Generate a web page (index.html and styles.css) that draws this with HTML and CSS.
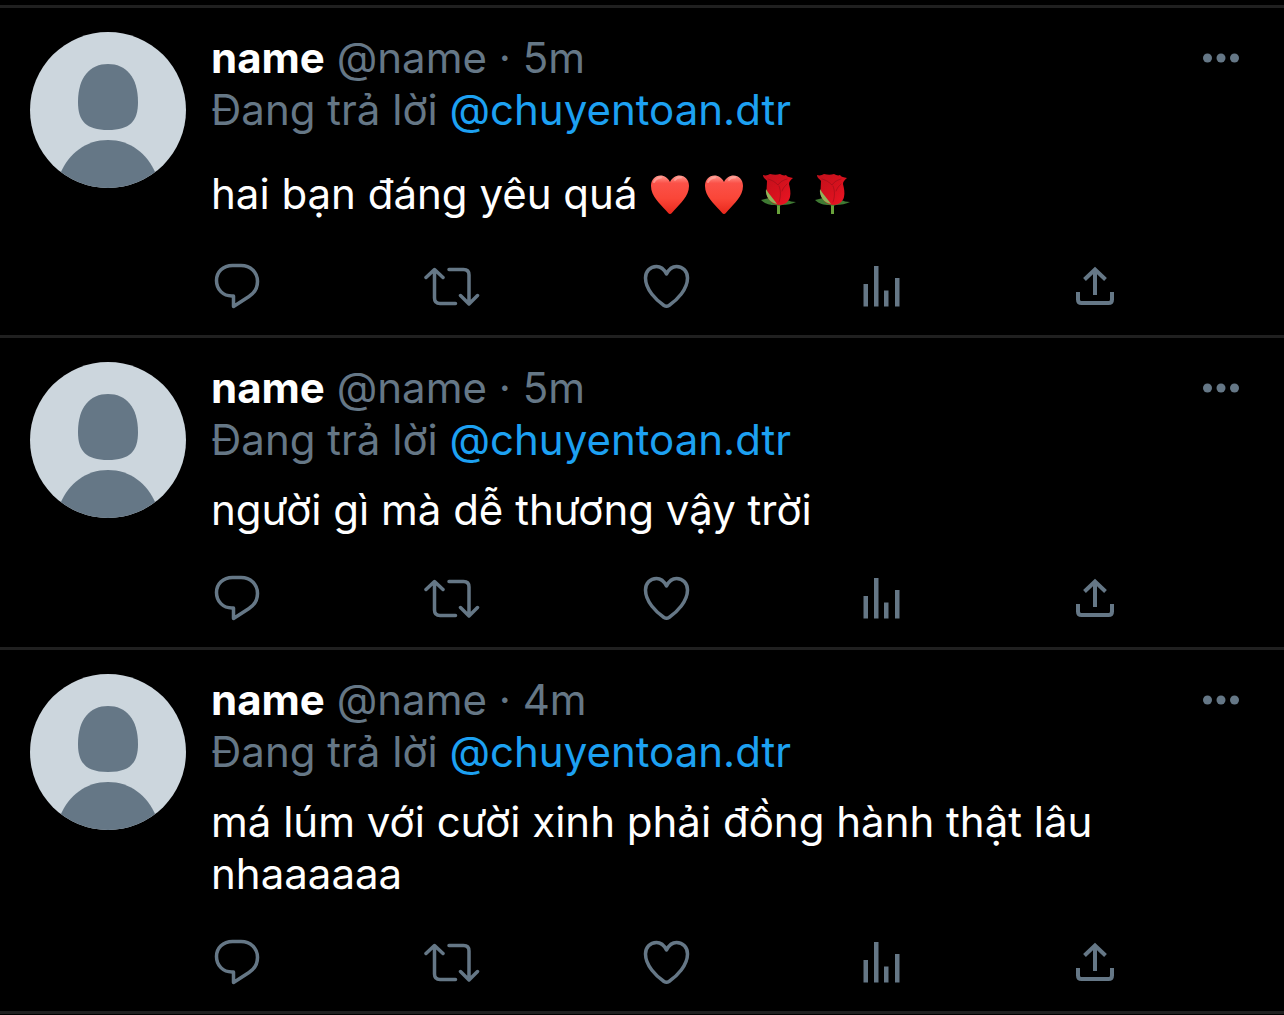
FILE: index.html
```
<!DOCTYPE html>
<html lang="vi">

<head>
    <meta charset="UTF-8">
    <meta name="viewport" content="width=device-width, initial-scale=1.0">
    <title>Tweets</title>
    <link rel="stylesheet" href="styles.css">
</head>

<body>
    <svg class="sprite" aria-hidden="true">
        <defs>
            <linearGradient id="heart-fill" x1="0" y1="0" x2="0" y2="1">
                <stop offset="0" stop-color="#ff9a90" />
                <stop offset="0.2" stop-color="#fb5148" />
                <stop offset="0.6" stop-color="#fa4638" />
                <stop offset="1" stop-color="#e8281c" />
            </linearGradient>
            <linearGradient id="rose-fill" x1="0" y1="0" x2="1" y2="1">
                <stop offset="0" stop-color="#c2101c" />
                <stop offset="0.5" stop-color="#d5111d" />
                <stop offset="1" stop-color="#ee1525" />
            </linearGradient>
        </defs>
        <symbol id="avatar" viewBox="0 0 156 156">
            <path d="M78 32c18 0 30 13 30 38 0 19-8 28-30 28s-30-9-30-28c0-25 12-38 30-38z" />
            <path d="M30 142C39 121 56 108 78 108s39 13 48 34v14H30z" />
        </symbol>
        <symbol id="more" viewBox="0 0 36 10">
            <circle cx="4.5" cy="5" r="4.5" />
            <circle cx="18" cy="5" r="4.5" />
            <circle cx="31.5" cy="5" r="4.5" />
        </symbol>
        <symbol id="reply" viewBox="0 0 52 52">
            <path d="M22.5 36v10.5L38 36.5C43.5 33 46.5 28 46.5 21.5 46.5 12 39.5 5.5 30 5.5h-8.5C12 5.5 5.5 12 5.5 20.5 5.5 29.5 12 36 21 36z" fill="none" stroke="currentColor" stroke-width="3.5" stroke-linejoin="round" />
        </symbol>
        <symbol id="retweet" viewBox="-2 0 56 52">
            <path d="M0 17.5l8.5-8 8.5 8M8.5 10v28q0 5.5 5.5 5.5H29.5M23 9.5H37.5q5.5 0 5.5 5.5v28M34.5 35.5l8.5 8.5 8.5-8.5" fill="none" stroke="currentColor" stroke-width="3.5" stroke-linecap="round" stroke-linejoin="round" />
        </symbol>
        <symbol id="like" viewBox="0 0 52 52">
            <path d="M26.5 14C24 9 20.5 6.5 16.5 6.5 10 6.5 5.5 11.5 5.5 18c0 11.5 10.5 22 18.5 27.5q2.5 1.5 5 0C37 40 47.5 29.5 47.5 18 47.5 11.5 43 6.5 36.5 6.5 32.5 6.5 29 9 26.5 14z" fill="none" stroke="currentColor" stroke-width="3.5" stroke-linejoin="round" />
        </symbol>
        <symbol id="stats" viewBox="0 0 52 52">
            <path d="M8.5 24H13v22.5H8.5zM19 6h4.5v40.5H19zM29 30.5h4.5v16H29zM40 18h4.5v28.5H40z" />
        </symbol>
        <symbol id="share" viewBox="0 0 52 52">
            <path d="M9 32v7.5q0 3.5 3.5 3.5h27q3.500 0 3.500-3.500V32M26 35V10M15.5 19.5L26 9.500l10.500 10" fill="none" stroke="currentColor" stroke-width="4" />
        </symbol>
        <symbol id="heart" viewBox="0 0 42 42">
            <path d="M21 9C19 5 15.500 2.500 11.500 2.500 6 2.500 2 7 2 13c0 10 9 18 15 24.500 1.500 1.500 2.500 3.500 4 3.500s2.500-2 4-3.500C31 31 40 23 40 13 40 7 36 2.500 30.500 2.500 26.500 2.500 23 5 21 9z" fill="url(#heart-fill)" />
            <path d="M5 9q2-4 7-4.500M26 7q2-3 6-2.500" fill="none" stroke="#ffc0b8" stroke-width="2" stroke-linecap="round" opacity="0.5" />
        </symbol>
        <symbol id="rose" viewBox="0 0 42 42">
            <path d="M20 31h3v10h-3z" fill="#69a33b" />
            <path d="M4 27c4 4 9 5 14 5 3 1 5 1 7 0 5 0 10-1 14-3-4 0-6-1-9-2L12 25z" fill="#3f7a33" />
            <path d="M6 2c3 1 5 0 7-1 4 1 7 1 10 0 2 1 4 2 6 1 1 2 4 2 7 3-2 2-4 3-4 6 1 4 2 9 1 13-1 5-6 8-10 8-6 0-11-4-13-9C9 18 10 12 10 8 9 6 6 5 6 2z" fill="url(#rose-fill)" />
            <path d="M9 16c2 4 7 9 11 15-7-1-12-8-11-15z" fill="#8fb55a" />
            <path d="M11 6c4 1 7 3 10 6 2-3 5-5 9-6M22 13c2 5 2 10 0 16M30 11c-2 2-4 4-5 7" fill="none" stroke="#8c0d18" stroke-width="1" stroke-linecap="round" opacity="0.5" />
        </symbol>
    </svg>

    <main>
        <article class="tweet">
            <svg class="avatar" role="img" aria-label="name"><use href="#avatar" /></svg>
            <div class="content">
                <header class="top">
                    <div><strong class="name">name</strong> <span class="muted">@name · 5m</span></div>
                    <button class="more" aria-label="More"><svg><use href="#more" /></svg></button>
                </header>
                <p class="muted">Đang trả lời <a href="#">@chuyentoan.dtr</a></p>
                <p class="text with-emoji">hai bạn đáng yêu quá
                    <svg class="emoji" role="img" aria-label="❤️"><use href="#heart" /></svg>
                    <svg class="emoji" role="img" aria-label="❤️"><use href="#heart" /></svg>
                    <svg class="emoji" role="img" aria-label="🌹"><use href="#rose" /></svg>
                    <svg class="emoji" role="img" aria-label="🌹"><use href="#rose" /></svg>
                </p>
                <div class="actions">
                    <button aria-label="Reply"><svg><use href="#reply" /></svg></button>
                    <button aria-label="Retweet"><svg class="wide"><use href="#retweet" /></svg></button>
                    <button aria-label="Like"><svg><use href="#like" /></svg></button>
                    <button aria-label="Analytics"><svg><use href="#stats" /></svg></button>
                    <button aria-label="Share"><svg><use href="#share" /></svg></button>
                </div>
            </div>
        </article>

        <article class="tweet">
            <svg class="avatar" role="img" aria-label="name"><use href="#avatar" /></svg>
            <div class="content">
                <header class="top">
                    <div><strong class="name">name</strong> <span class="muted">@name · 5m</span></div>
                    <button class="more" aria-label="More"><svg><use href="#more" /></svg></button>
                </header>
                <p class="muted">Đang trả lời <a href="#">@chuyentoan.dtr</a></p>
                <p class="text">người gì mà dễ thương vậy trời</p>
                <div class="actions">
                    <button aria-label="Reply"><svg><use href="#reply" /></svg></button>
                    <button aria-label="Retweet"><svg class="wide"><use href="#retweet" /></svg></button>
                    <button aria-label="Like"><svg><use href="#like" /></svg></button>
                    <button aria-label="Analytics"><svg><use href="#stats" /></svg></button>
                    <button aria-label="Share"><svg><use href="#share" /></svg></button>
                </div>
            </div>
        </article>

        <article class="tweet">
            <svg class="avatar" role="img" aria-label="name"><use href="#avatar" /></svg>
            <div class="content">
                <header class="top">
                    <div><strong class="name">name</strong> <span class="muted">@name · 4m</span></div>
                    <button class="more" aria-label="More"><svg><use href="#more" /></svg></button>
                </header>
                <p class="muted">Đang trả lời <a href="#">@chuyentoan.dtr</a></p>
                <p class="text">má lúm với cười xinh phải đồng hành thật lâu nhaaaaaa</p>
                <div class="actions">
                    <button aria-label="Reply"><svg><use href="#reply" /></svg></button>
                    <button aria-label="Retweet"><svg class="wide"><use href="#retweet" /></svg></button>
                    <button aria-label="Like"><svg><use href="#like" /></svg></button>
                    <button aria-label="Analytics"><svg><use href="#stats" /></svg></button>
                    <button aria-label="Share"><svg><use href="#share" /></svg></button>
                </div>
            </div>
        </article>
    </main>
</body>

</html>
```
FILE: styles.css
```
* { box-sizing: border-box; }
body {
    margin: 0;
    padding-top: 5px;
    background-color: #000;
    color: #fff;
    font-family: Inter, "Noto Sans", sans-serif;
    font-size: 42px;
    line-height: 52px;
}

p { margin: 0; }
a {
    color: #1da1f2;
    text-decoration: none;
}
button {
    display: flex;
    align-items: center;
    justify-content: center;
    padding: 0;
    border: none;
    background: none;
    color: #657786;
    cursor: pointer;
}
svg { fill: currentColor; }

.sprite {
    display: block;
    width: 0;
    height: 0;
}

.tweet {
    display: flex;
    gap: 25px;
    padding: 24px 45px 23px 30px;
    border-top: 3px solid #202020;
}
.tweet:last-child { border-bottom: 3px solid #202020; }

.avatar {
    flex: none;
    width: 156px;
    height: 156px;
    border-radius: 50%;
    background-color: #ccd6dd;
    color: #657786;
}

.content {
    flex: 1;
    min-width: 0;
}
.top {
    display: flex;
    justify-content: space-between;
}
.name { font-weight: 700; }
.muted { color: #657786; }
.more svg {
    width: 36px;
    height: 10px;
}

.text { margin: 18px 0 36px; }
.with-emoji {
    padding-top: 14px;
    padding-bottom: 4px;
}
.emoji {
    width: 42px;
    height: 42px;
    vertical-align: -6px;
}

.actions {
    display: flex;
    justify-content: space-between;
    margin-right: 118px;
}
.actions button {
    width: 52px;
    height: 52px;
}
.actions svg {
    flex: none;
    width: 52px;
    height: 52px;
}
.actions .wide { width: 56px; }
```
